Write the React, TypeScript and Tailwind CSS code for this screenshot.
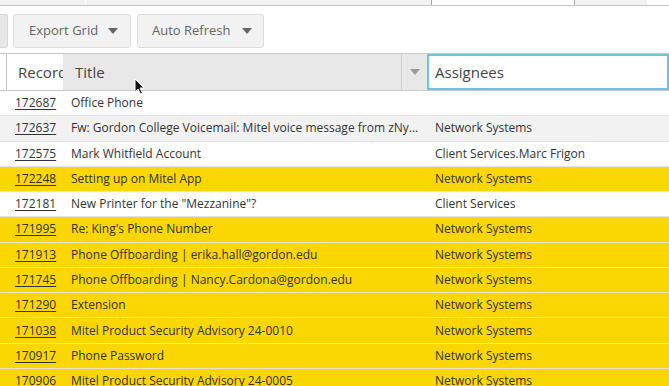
import React from "react";

type Row = { id: string; title: string; assignee: string; hot?: boolean };

const rows: Row[] = [
  { id: "172687", title: "Office Phone", assignee: "" },
  { id: "172637", title: "Fw: Gordon College Voicemail: Mitel voice message from zNy...", assignee: "Network Systems" },
  { id: "172575", title: "Mark Whitfield Account", assignee: "Client Services.Marc Frigon" },
  { id: "172248", title: "Setting up on Mitel App", assignee: "Network Systems", hot: true },
  { id: "172181", title: 'New Printer for the "Mezzanine"?', assignee: "Client Services" },
  { id: "171995", title: "Re: King's Phone Number", assignee: "Network Systems", hot: true },
  { id: "171913", title: "Phone Offboarding | erika.hall@gordon.edu", assignee: "Network Systems", hot: true },
  { id: "171745", title: "Phone Offboarding | Nancy.Cardona@gordon.edu", assignee: "Network Systems", hot: true },
  { id: "171290", title: "Extension", assignee: "Network Systems", hot: true },
  { id: "171038", title: "Mitel Product Security Advisory 24-0010", assignee: "Network Systems", hot: true },
  { id: "170917", title: "Phone Password", assignee: "Network Systems", hot: true },
  { id: "170906", title: "Mitel Product Security Advisory 24-0005", assignee: "Network Systems", hot: true },
];

function Caret({ className }: { className?: string }) {
  return (
    <svg width="10" height="6" viewBox="0 0 10 6" className={className}>
      <path d="M0 0 L10 0 L5 6 Z" fill="currentColor" />
    </svg>
  );
}

export default function App() {
  return (
    <div className="relative w-[669px] h-[386px] overflow-hidden bg-white font-['Open_Sans',sans-serif] text-[#333]">
      {/* tab strip */}
      <div className="flex h-[6px] border-b border-[#c8c8c8]">
        <div className="w-[86px] bg-[#f2f2f2] border-r border-white"></div>
        <div className="w-[346px] bg-[#f2f2f2] border-r border-[#aaa]"></div>
        <div className="w-[143px] bg-white border-r border-[#aaa]"></div>
        <div className="w-[72px] bg-[#f2f2f2]"></div>
        <div className="flex-1 bg-white"></div>
      </div>

      {/* toolbar */}
      <div className="flex items-center h-[47px] pt-[2px]">
        <div className="w-[8px] h-[34px] shrink-0 bg-[#e6e6e6] border border-l-0 border-[#d8d8d8] rounded-r-[3px]"></div>
        <div className="ml-[5px] flex items-center gap-[10px] shrink-0 whitespace-nowrap h-[34px] w-[118px] pl-[15px] bg-[#f2f2f2] border border-[#dcdcdc] rounded-[3px] text-[13px] text-[#666]">
          <span>Export Grid</span>
          <Caret className="text-[#666]" />
        </div>
        <div className="ml-[6px] flex items-center gap-[11px] shrink-0 whitespace-nowrap h-[34px] w-[127px] pl-[14px] bg-[#f2f2f2] border border-[#dcdcdc] rounded-[3px] text-[13px] text-[#666]">
          <span>Auto Refresh</span>
          <Caret className="text-[#666]" />
        </div>
      </div>

      {/* header */}
      <div className="flex h-[38px] border-y border-[#c8c8c8] text-[15px] text-[#444]">
        <div className="w-[7px] border-r border-[#c8c8c8]"></div>
        <div className="w-[56px] pl-[11px] flex items-center overflow-hidden whitespace-nowrap">Record</div>
        <div className="w-[338px] pl-[12px] flex items-center bg-[#e8e8e8]">Title</div>
        <div className="w-[26px] flex items-center justify-center bg-[#e8e8e8] border-l border-[#cfcfcf]">
          <Caret className="text-[#999]" />
        </div>
        <div className="flex-1 flex items-center pl-[6px] border-2 border-[#6cc4da] bg-white">Assignees</div>
      </div>

      {/* rows */}
      <div className="text-[12px]">
        {rows.map((r, i) => (
          <div
            key={r.id}
            className={`flex items-center h-[25.27px] border-b ${
              r.hot ? "bg-[#fad700] border-[#e9e4c8]" : i % 2 === 1 ? "bg-[#f2f2f2] border-[#e2e2e2]" : "bg-white border-[#e2e2e2]"
            }`}
          >
            <div className="w-[71px] pl-[15px] shrink-0">
              <span className="underline underline-offset-[2px]">{r.id}</span>
            </div>
            <div className="w-[364px] shrink-0 whitespace-nowrap overflow-hidden">{r.title}</div>
            <div className="flex-1 whitespace-nowrap overflow-hidden">{r.assignee}</div>
          </div>
        ))}
      </div>

      {/* mouse pointer */}
      <svg className="absolute left-[134px] top-[78px]" width="12" height="17" viewBox="0 0 12 17">
        <path d="M1 1 L1 14 L4 11 L6.5 16 L8.5 15 L6 10 L10 10 Z" fill="#111" stroke="#fff" strokeWidth="1" />
      </svg>
    </div>
  );
}
